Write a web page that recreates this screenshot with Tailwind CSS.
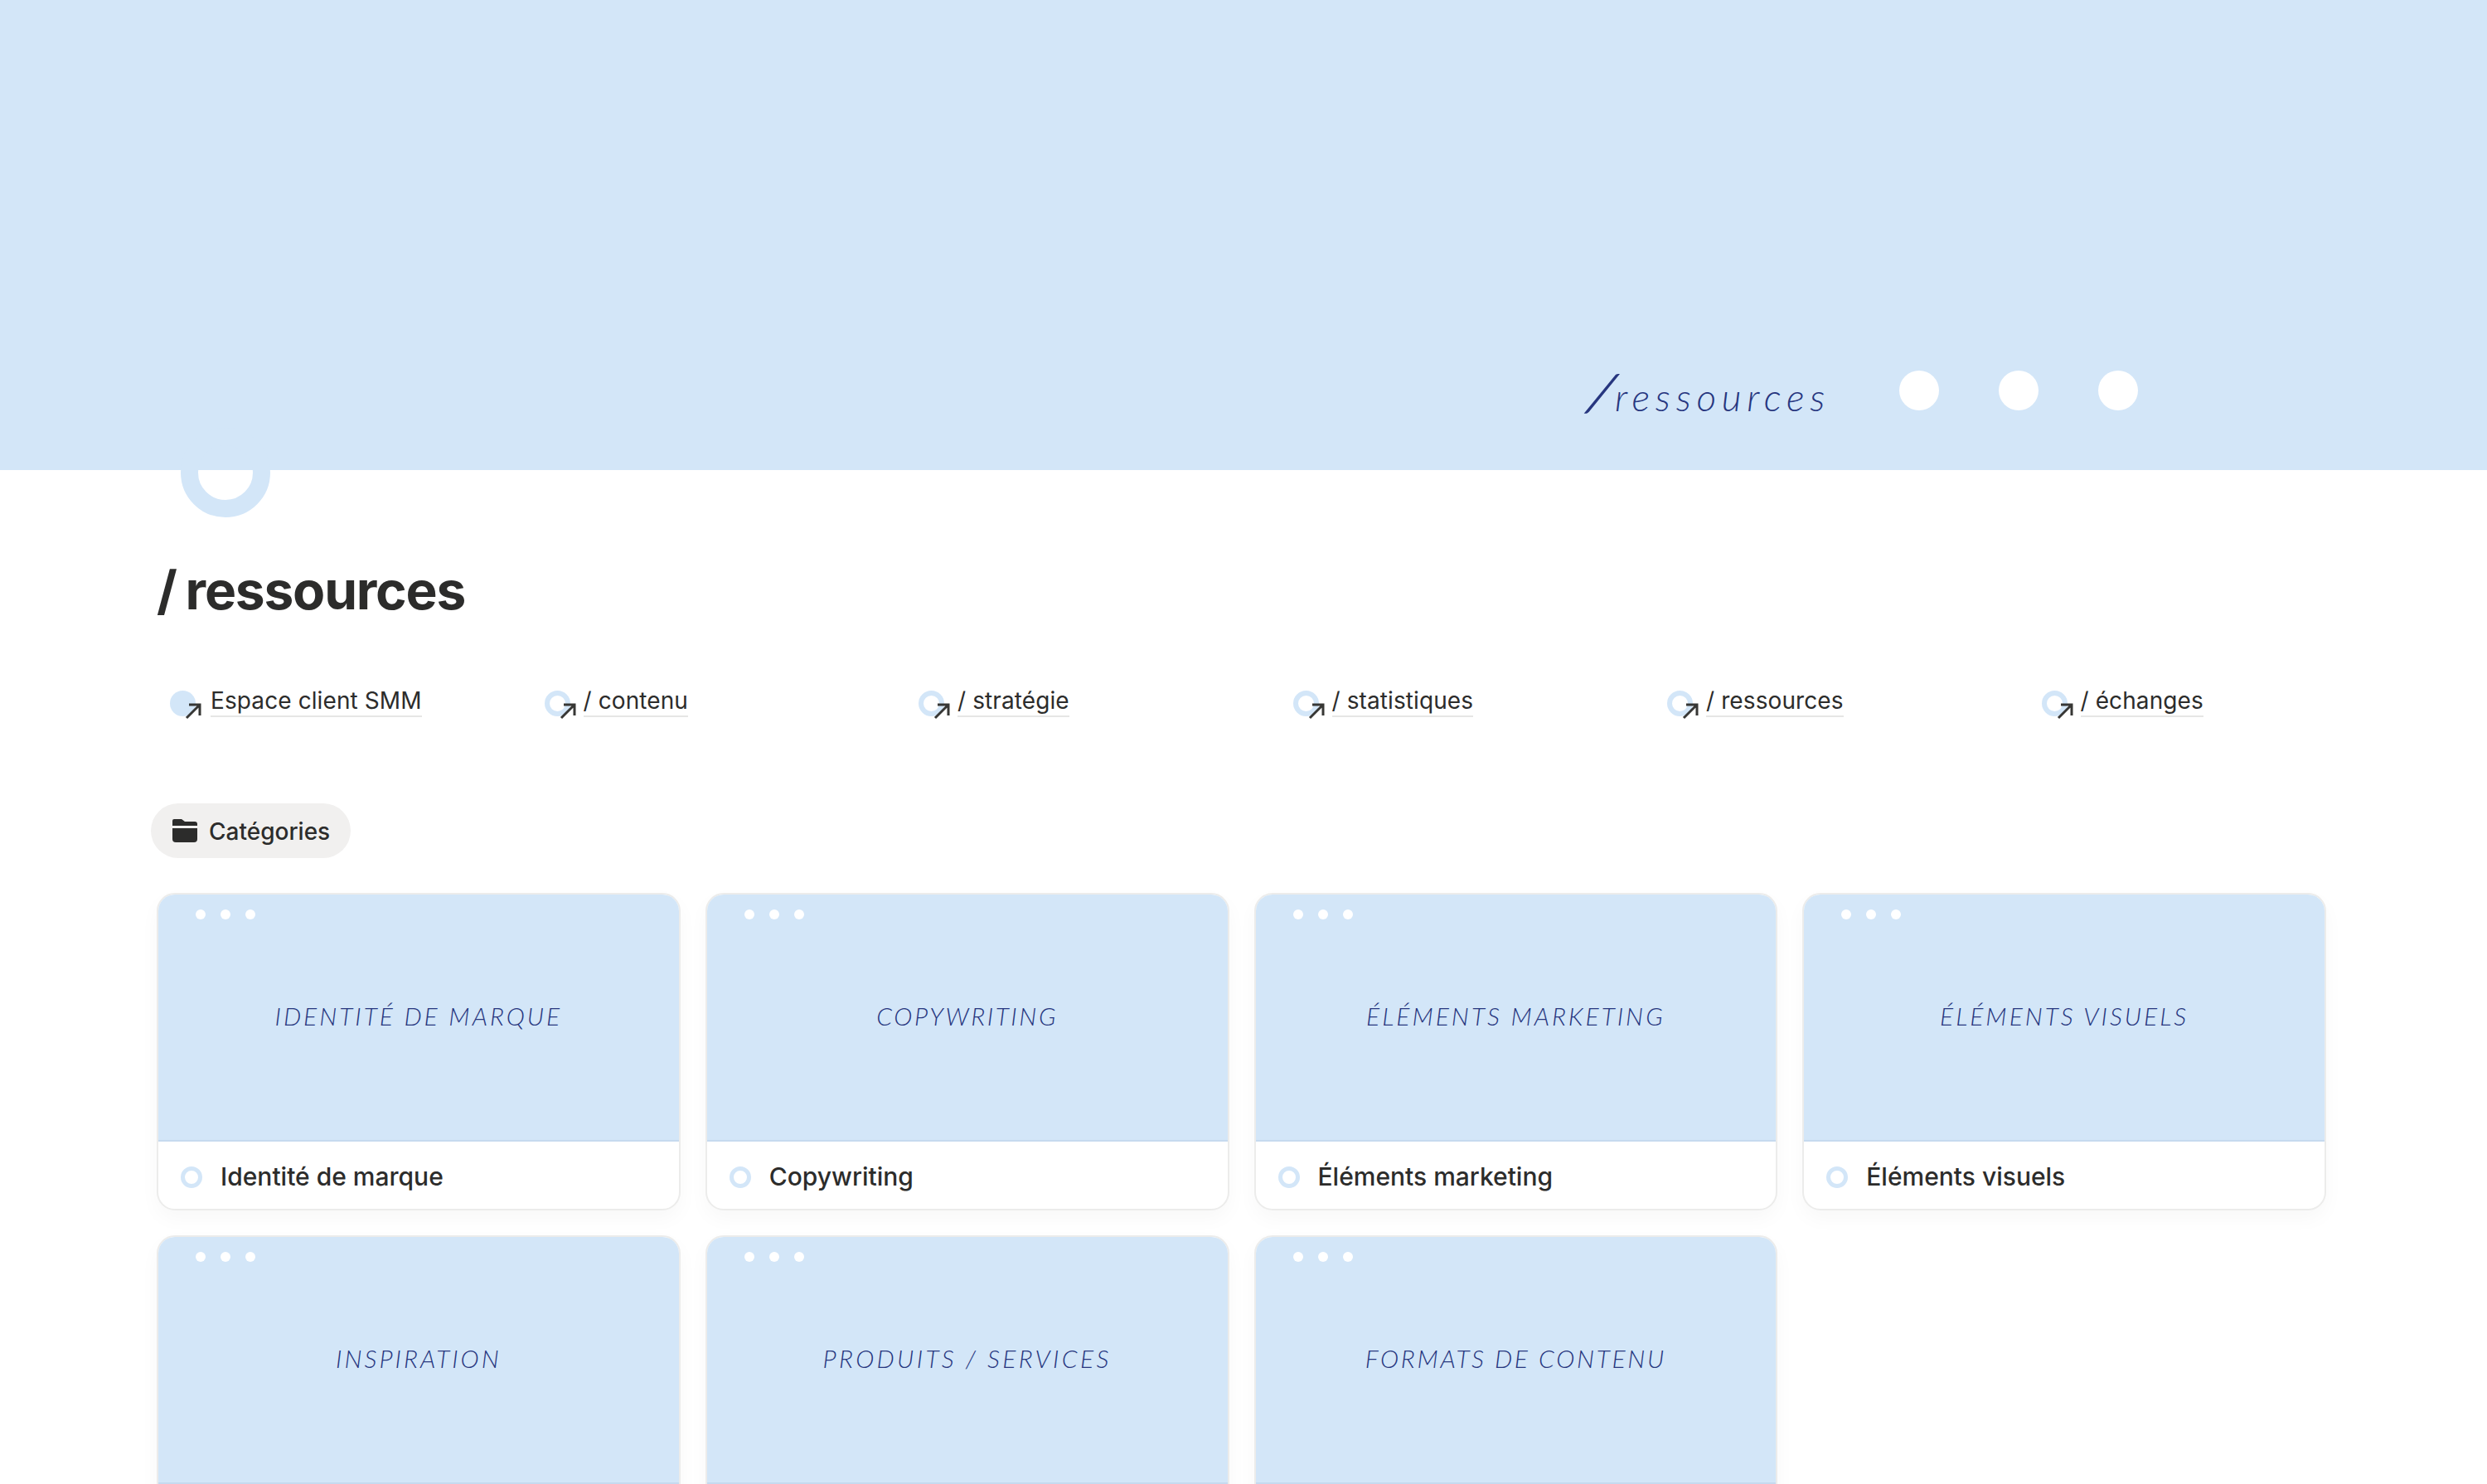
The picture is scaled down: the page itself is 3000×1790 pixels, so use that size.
<!DOCTYPE html>
<html lang="fr">
<head>
  <meta charset="UTF-8" />
  <title>/ ressources</title>
  <script src="https://cdn.jsdelivr.net/npm/@tailwindcss/browser@4"></script>
</head>
<body class="bg-white h-[1790px] overflow-hidden font-[Inter,sans-serif] text-[#2c2c2b]">

  <!-- banner -->
  <header class="bg-[#d3e6f8] h-[567px] flex items-start pt-[447px] pl-[1913px]">
    <span class="w-[378px] text-[#27367f] font-[Lato,sans-serif] italic font-light text-[46px] leading-[60px] tracking-[6.7px] whitespace-nowrap"><span class="inline-block w-[35px] pl-[7px] text-[62px] font-normal leading-[50px] tracking-normal -skew-x-[18deg]">/</span>ressources</span>
    <span class="w-[48px] h-[48px] rounded-full bg-white"></span>
    <span class="w-[48px] h-[48px] rounded-full bg-white ml-[72px]"></span>
    <span class="w-[48px] h-[48px] rounded-full bg-white ml-[72px]"></span>
  </header>

  <main class="pl-[189px]">
    <div class="w-[108px] h-[108px] ml-[29px] -mt-[51px] rounded-full border-[21px] border-[#d3e6f8] relative"></div>

    <h1 class="mt-[49px] text-[64px] leading-[78px] font-bold tracking-[-1.2px] [word-spacing:-3px]">/ ressources</h1>

    <!-- links -->
    <nav class="mt-[76px] w-[2709px] grid grid-cols-6 text-[28px] leading-[36px] tracking-[0.1px]">
      <a class="flex items-start pl-[16px]">
        <span class="relative w-[31px] h-[31px] mt-[6px] mr-[18px] rounded-full bg-[#d3e6f8]">
          <svg class="absolute left-[18px] top-[14px]" width="22" height="22" viewBox="0 0 22 22" fill="none" stroke="#373735" stroke-width="3"><path d="M2 19 L18 3 M5 3 H18 V16" /></svg>
        </span>
        <span class="border-b-2 border-[#e6e6e5]">Espace client SMM</span>
      </a>
      <a class="flex items-start pl-[16px]">
        <span class="relative w-[31px] h-[31px] mt-[6px] mr-[16px] rounded-full border-[6px] border-[#d3e6f8]">
          <svg class="absolute left-[12px] top-[8px]" width="22" height="22" viewBox="0 0 22 22" fill="none" stroke="#373735" stroke-width="3"><path d="M2 19 L18 3 M5 3 H18 V16" /></svg>
        </span>
        <span class="border-b-2 border-[#e6e6e5]">/ contenu</span>
      </a>
      <a class="flex items-start pl-[16px]">
        <span class="relative w-[31px] h-[31px] mt-[6px] mr-[16px] rounded-full border-[6px] border-[#d3e6f8]">
          <svg class="absolute left-[12px] top-[8px]" width="22" height="22" viewBox="0 0 22 22" fill="none" stroke="#373735" stroke-width="3"><path d="M2 19 L18 3 M5 3 H18 V16" /></svg>
        </span>
        <span class="border-b-2 border-[#e6e6e5]">/ stratégie</span>
      </a>
      <a class="flex items-start pl-[16px]">
        <span class="relative w-[31px] h-[31px] mt-[6px] mr-[16px] rounded-full border-[6px] border-[#d3e6f8]">
          <svg class="absolute left-[12px] top-[8px]" width="22" height="22" viewBox="0 0 22 22" fill="none" stroke="#373735" stroke-width="3"><path d="M2 19 L18 3 M5 3 H18 V16" /></svg>
        </span>
        <span class="border-b-2 border-[#e6e6e5]">/ statistiques</span>
      </a>
      <a class="flex items-start pl-[16px]">
        <span class="relative w-[31px] h-[31px] mt-[6px] mr-[16px] rounded-full border-[6px] border-[#d3e6f8]">
          <svg class="absolute left-[12px] top-[8px]" width="22" height="22" viewBox="0 0 22 22" fill="none" stroke="#373735" stroke-width="3"><path d="M2 19 L18 3 M5 3 H18 V16" /></svg>
        </span>
        <span class="border-b-2 border-[#e6e6e5]">/ ressources</span>
      </a>
      <a class="flex items-start pl-[16px]">
        <span class="relative w-[31px] h-[31px] mt-[6px] mr-[16px] rounded-full border-[6px] border-[#d3e6f8]">
          <svg class="absolute left-[12px] top-[8px]" width="22" height="22" viewBox="0 0 22 22" fill="none" stroke="#373735" stroke-width="3"><path d="M2 19 L18 3 M5 3 H18 V16" /></svg>
        </span>
        <span class="border-b-2 border-[#e6e6e5]">/ échanges</span>
      </a>
    </nav>

    <!-- tab -->
    <div class="mt-[104px] -ml-[7px] w-[241px] h-[66px] rounded-[33px] bg-[#f1f0ef] flex items-center pl-[26px] gap-[14px] text-[28px] font-medium">
      <svg width="30" height="28" viewBox="0 0 30 28" fill="#2c2c2b"><path d="M0 2 Q0 0 2 0 H11 L15 3 H27 Q30 3 30 6 V8 H0 Z" /><path d="M0 11 H30 V24 Q30 28 26 28 H4 Q0 28 0 24 Z" /></svg>
      <span class="mt-[2px]">Catégories</span>
    </div>

    <!-- cards -->
    <section class="mt-[42px] w-[2617px] grid grid-cols-4 gap-x-[30px] gap-y-[30px]">

      <article class="h-[383px] rounded-[22px] overflow-hidden border-2 border-[#ececeb] bg-white shadow-[0_10px_24px_rgba(0,0,0,0.03)]">
        <div class="h-[298px] bg-[#d3e6f8] border-b-2 border-[#c6daef] relative flex items-center justify-center">
          <span class="absolute left-[45px] top-[18px] flex gap-[18px]"><i class="w-[12px] h-[12px] rounded-full bg-white"></i><i class="w-[12px] h-[12px] rounded-full bg-white"></i><i class="w-[12px] h-[12px] rounded-full bg-white"></i></span>
          <span class="font-[Lato,sans-serif] italic font-light text-[30px] tracking-[3px] text-[#27367f] -mt-[4px]">IDENTITÉ DE MARQUE</span>
        </div>
        <div class="h-[81px] flex items-center pl-[27px] pt-[4px] gap-[22px] text-[30px] font-medium">
          <i class="w-[26px] h-[26px] rounded-full border-[5px] border-[#d3e6f8]"></i><span>Identité de marque</span>
        </div>
      </article>

      <article class="h-[383px] rounded-[22px] overflow-hidden border-2 border-[#ececeb] bg-white shadow-[0_10px_24px_rgba(0,0,0,0.03)]">
        <div class="h-[298px] bg-[#d3e6f8] border-b-2 border-[#c6daef] relative flex items-center justify-center">
          <span class="absolute left-[45px] top-[18px] flex gap-[18px]"><i class="w-[12px] h-[12px] rounded-full bg-white"></i><i class="w-[12px] h-[12px] rounded-full bg-white"></i><i class="w-[12px] h-[12px] rounded-full bg-white"></i></span>
          <span class="font-[Lato,sans-serif] italic font-light text-[30px] tracking-[2.6px] text-[#27367f] -mt-[4px]">COPYWRITING</span>
        </div>
        <div class="h-[81px] flex items-center pl-[27px] pt-[4px] gap-[22px] text-[30px] font-medium">
          <i class="w-[26px] h-[26px] rounded-full border-[5px] border-[#d3e6f8]"></i><span>Copywriting</span>
        </div>
      </article>

      <article class="h-[383px] rounded-[22px] overflow-hidden border-2 border-[#ececeb] bg-white shadow-[0_10px_24px_rgba(0,0,0,0.03)]">
        <div class="h-[298px] bg-[#d3e6f8] border-b-2 border-[#c6daef] relative flex items-center justify-center">
          <span class="absolute left-[45px] top-[18px] flex gap-[18px]"><i class="w-[12px] h-[12px] rounded-full bg-white"></i><i class="w-[12px] h-[12px] rounded-full bg-white"></i><i class="w-[12px] h-[12px] rounded-full bg-white"></i></span>
          <span class="font-[Lato,sans-serif] italic font-light text-[30px] tracking-[3px] text-[#27367f] -mt-[4px]">ÉLÉMENTS MARKETING</span>
        </div>
        <div class="h-[81px] flex items-center pl-[27px] pt-[4px] gap-[22px] text-[30px] font-medium">
          <i class="w-[26px] h-[26px] rounded-full border-[5px] border-[#d3e6f8]"></i><span>Éléments marketing</span>
        </div>
      </article>

      <article class="h-[383px] rounded-[22px] overflow-hidden border-2 border-[#ececeb] bg-white shadow-[0_10px_24px_rgba(0,0,0,0.03)]">
        <div class="h-[298px] bg-[#d3e6f8] border-b-2 border-[#c6daef] relative flex items-center justify-center">
          <span class="absolute left-[45px] top-[18px] flex gap-[18px]"><i class="w-[12px] h-[12px] rounded-full bg-white"></i><i class="w-[12px] h-[12px] rounded-full bg-white"></i><i class="w-[12px] h-[12px] rounded-full bg-white"></i></span>
          <span class="font-[Lato,sans-serif] italic font-light text-[30px] tracking-[3px] text-[#27367f] -mt-[4px]">ÉLÉMENTS VISUELS</span>
        </div>
        <div class="h-[81px] flex items-center pl-[27px] pt-[4px] gap-[22px] text-[30px] font-medium">
          <i class="w-[26px] h-[26px] rounded-full border-[5px] border-[#d3e6f8]"></i><span>Éléments visuels</span>
        </div>
      </article>

      <article class="h-[383px] rounded-[22px] overflow-hidden border-2 border-[#ececeb] bg-white shadow-[0_10px_24px_rgba(0,0,0,0.03)]">
        <div class="h-[298px] bg-[#d3e6f8] border-b-2 border-[#c6daef] relative flex items-center justify-center">
          <span class="absolute left-[45px] top-[18px] flex gap-[18px]"><i class="w-[12px] h-[12px] rounded-full bg-white"></i><i class="w-[12px] h-[12px] rounded-full bg-white"></i><i class="w-[12px] h-[12px] rounded-full bg-white"></i></span>
          <span class="font-[Lato,sans-serif] italic font-light text-[30px] tracking-[3px] text-[#27367f] -mt-[4px]">INSPIRATION</span>
        </div>
      </article>

      <article class="h-[383px] rounded-[22px] overflow-hidden border-2 border-[#ececeb] bg-white shadow-[0_10px_24px_rgba(0,0,0,0.03)]">
        <div class="h-[298px] bg-[#d3e6f8] border-b-2 border-[#c6daef] relative flex items-center justify-center">
          <span class="absolute left-[45px] top-[18px] flex gap-[18px]"><i class="w-[12px] h-[12px] rounded-full bg-white"></i><i class="w-[12px] h-[12px] rounded-full bg-white"></i><i class="w-[12px] h-[12px] rounded-full bg-white"></i></span>
          <span class="font-[Lato,sans-serif] italic font-light text-[30px] tracking-[3.3px] text-[#27367f] -mt-[4px]">PRODUITS / SERVICES</span>
        </div>
      </article>

      <article class="h-[383px] rounded-[22px] overflow-hidden border-2 border-[#ececeb] bg-white shadow-[0_10px_24px_rgba(0,0,0,0.03)]">
        <div class="h-[298px] bg-[#d3e6f8] border-b-2 border-[#c6daef] relative flex items-center justify-center">
          <span class="absolute left-[45px] top-[18px] flex gap-[18px]"><i class="w-[12px] h-[12px] rounded-full bg-white"></i><i class="w-[12px] h-[12px] rounded-full bg-white"></i><i class="w-[12px] h-[12px] rounded-full bg-white"></i></span>
          <span class="font-[Lato,sans-serif] italic font-light text-[30px] tracking-[2.7px] text-[#27367f] -mt-[4px]">FORMATS DE CONTENU</span>
        </div>
      </article>

    </section>
  </main>
</body>
</html>
